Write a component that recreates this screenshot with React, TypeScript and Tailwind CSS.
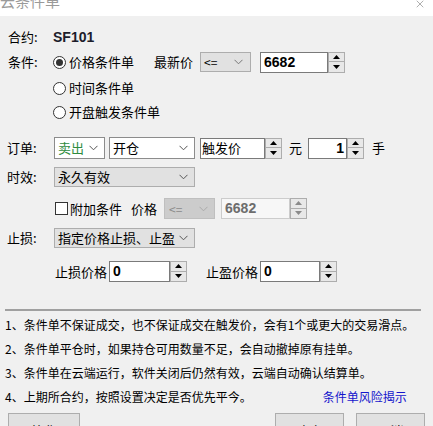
import { X } from 'lucide-react';

const font = { fontFamily: '"Microsoft YaHei", "Noto Sans CJK SC", sans-serif' };

function Chevron({ color = '#555' }: { color?: string }) {
  return (
    <svg width="9" height="6" viewBox="0 0 9 6" className="shrink-0">
      <path d="M0.5 0.8 L4.5 4.8 L8.5 0.8" fill="none" stroke={color} strokeWidth="1" />
    </svg>
  );
}

function SpinButtons({ disabled }: { disabled?: boolean }) {
  const tri = disabled ? '#8a8a8a' : '#000';
  return (
    <div className="flex w-[17px] shrink-0 flex-col">
      <div className="flex h-1/2 items-center justify-center border border-[#adadad] bg-[#e8e8e8]">
        <svg width="7" height="4" viewBox="0 0 7 4">
          <path d="M0 4 L3.5 0 L7 4 Z" fill={tri} />
        </svg>
      </div>
      <div className="flex h-1/2 items-center justify-center border border-t-0 border-[#adadad] bg-[#e8e8e8]">
        <svg width="7" height="4" viewBox="0 0 7 4">
          <path d="M0 0 L3.5 4 L7 0 Z" fill={tri} />
        </svg>
      </div>
    </div>
  );
}

export default function App() {
  return (
    <div className="relative h-[426px] w-[433px] overflow-hidden bg-[#f0f0f0] text-[13px] text-black" style={font}>
      {/* Title bar */}
      <div className="flex h-4 items-start justify-between overflow-hidden bg-white">
        <span className="-mt-[7px] text-[15px] leading-none text-[#9a9a9a]">云条件单</span>
        <X size={12} strokeWidth={1.2} className="mr-[7px] -mt-[2px] text-[#777]" />
      </div>

      <div className="pl-[8px]">
        {/* 合约 */}
        <div className="mt-[11px] flex h-5 items-center">
          <span className="w-[45px]">合约:</span>
          <span className="text-[14px] font-bold text-[#1d1d2b]" style={{ fontFamily: 'Arial, "Liberation Sans", sans-serif' }}>
            SF101
          </span>
        </div>

        {/* 条件 */}
        <div className="mt-[5px] flex h-5 items-center">
          <span className="w-[45px]">条件:</span>
          <span className="flex h-[13px] w-[13px] items-center justify-center rounded-full border border-[#333] bg-white">
            <span className="h-[7px] w-[7px] rounded-full bg-[#333]" />
          </span>
          <span className="ml-[3px]">价格条件单</span>
          <span className="ml-[20px]">最新价</span>
          <div className="ml-[7px] flex h-5 w-[51px] items-center justify-between border border-[#adadad] bg-[#e1e1e1] pl-[3px] pr-[7px]">
            <span className="text-[12px]">&lt;=</span>
            <Chevron color="#777" />
          </div>
          <div className="ml-[9px] flex h-[21px]">
            <div className="flex w-[68px] items-center border border-[#7a7a7a] bg-white px-[3px] text-[14px] font-bold" style={{ fontFamily: 'Arial, "Liberation Sans", sans-serif' }}>
              6682
            </div>
            <SpinButtons />
          </div>
        </div>

        <div className="mt-[6px] flex h-5 items-center pl-[45px]">
          <span className="h-[13px] w-[13px] rounded-full border border-[#333] bg-white" />
          <span className="ml-[3px]">时间条件单</span>
        </div>
        <div className="mt-[4px] flex h-5 items-center pl-[45px]">
          <span className="h-[13px] w-[13px] rounded-full border border-[#333] bg-white" />
          <span className="ml-[3px]">开盘触发条件单</span>
        </div>

        {/* 订单 */}
        <div className="mt-[15px] flex h-[22px] items-center">
          <span className="-ml-px w-[47px]">订单:</span>
          <div className="flex h-[22px] w-[51px] items-center justify-between border border-[#8c8c8c] bg-white pl-[3px] pr-[6px]">
            <span className="text-[#2e8b3e]">卖出</span>
            <Chevron />
          </div>
          <div className="ml-[4px] flex h-[22px] w-[86px] items-center justify-between border border-[#8c8c8c] bg-white pl-[3px] pr-[6px]">
            <span>开仓</span>
            <Chevron />
          </div>
          <div className="ml-[5px] flex h-[21px]">
            <div className="flex w-[65px] items-center border border-[#7a7a7a] bg-white pl-[1px]">触发价</div>
            <SpinButtons />
          </div>
          <span className="ml-[7px]">元</span>
          <div className="ml-[6px] flex h-[21px]">
            <div className="flex w-[39px] items-center justify-end border border-[#7a7a7a] bg-white pr-[2px] text-[14px] font-bold" style={{ fontFamily: 'Arial, "Liberation Sans", sans-serif' }}>
              1
            </div>
            <SpinButtons />
          </div>
          <span className="ml-[8px]">手</span>
        </div>

        {/* 时效 */}
        <div className="mt-[8px] flex h-5 items-center">
          <span className="-ml-px w-[47px]">时效:</span>
          <div className="flex h-5 w-[141px] items-center justify-between border border-[#adadad] bg-[#e1e1e1] pl-[3px] pr-[6px]">
            <span>永久有效</span>
            <Chevron />
          </div>
        </div>

        {/* 附加条件 */}
        <div className="mt-[11px] flex h-[21px] items-center pl-[47px]">
          <span className="h-[13px] w-[13px] border border-[#333] bg-white" />
          <span className="ml-[2px]">附加条件</span>
          <span className="ml-[9px]">价格</span>
          <div className="ml-[7px] flex h-[21px] w-[51px] items-center justify-between border border-[#bfbfbf] bg-[#cccccc] pl-[4px] pr-[6px]">
            <span className="text-[12px] text-[#8a8a8a]">&lt;=</span>
            <Chevron color="#aaa" />
          </div>
          <div className="ml-[6px] flex h-[21px]">
            <div className="flex w-[69px] items-center border border-[#cccccc] bg-[#f7f7f7] px-[3px] text-[14px] font-bold text-[#6d6d6d]" style={{ fontFamily: 'Arial, "Liberation Sans", sans-serif' }}>
              6682
            </div>
            <SpinButtons disabled />
          </div>
        </div>

        {/* 止损 */}
        <div className="mt-[9px] flex h-5 items-center">
          <span className="-ml-px w-[47px]">止损:</span>
          <div className="flex h-5 w-[141px] items-center justify-between border border-[#adadad] bg-[#e1e1e1] pl-[3px] pr-[6px]">
            <span>指定价格止损、止盈</span>
            <Chevron />
          </div>
        </div>

        <div className="mt-[13px] flex h-[21px] items-center pl-[47px]">
          <span>止损价格</span>
          <div className="ml-[2px] flex h-[21px]">
            <div className="flex w-[61px] items-center border border-[#7a7a7a] bg-white px-[3px] text-[14px] font-bold" style={{ fontFamily: 'Arial, "Liberation Sans", sans-serif' }}>
              0
            </div>
            <SpinButtons />
          </div>
          <span className="ml-[19px]">止盈价格</span>
          <div className="ml-[2px] flex h-[21px]">
            <div className="flex w-[60px] items-center border border-[#7a7a7a] bg-white px-[3px] text-[14px] font-bold" style={{ fontFamily: 'Arial, "Liberation Sans", sans-serif' }}>
              0
            </div>
            <SpinButtons />
          </div>
        </div>
      </div>

      {/* Divider */}
      <div className="ml-[5px] mt-[27px] h-[2px] w-[416px] bg-[#a0a0a0]" />

      {/* Notes */}
      <div className="pl-[5px] text-[12px] leading-[24px]" style={{ fontFamily: '"SimSun", "Noto Sans CJK SC", sans-serif' }}>
        <div className="mt-[2px]">1、条件单不保证成交，也不保证成交在触发价，会有1个或更大的交易滑点。</div>
        <div>2、条件单平仓时，如果持仓可用数量不足，会自动撤掉原有挂单。</div>
        <div>3、条件单在云端运行，软件关闭后仍然有效，云端自动确认结算单。</div>
        <div className="flex">
          <span>4、上期所合约，按照设置决定是否优先平今。</span>
          <span className="ml-[71px] text-[#1515cc]">条件单风险揭示</span>
        </div>
      </div>

      {/* Buttons */}
      <div className="mt-[4px] flex px-[8px]">
        <div className="flex h-[22px] w-[72px] items-center justify-center border border-[#adadad] bg-[#e1e1e1] pt-[14px]">简化</div>
        <div className="ml-auto flex h-[22px] w-[69px] items-center justify-center border border-[#adadad] bg-[#e1e1e1] pt-[14px]">确定</div>
        <div className="ml-[12px] flex h-[22px] w-[69px] items-center justify-center border border-[#adadad] bg-[#e1e1e1] pt-[14px]">取消</div>
      </div>
    </div>
  );
}
